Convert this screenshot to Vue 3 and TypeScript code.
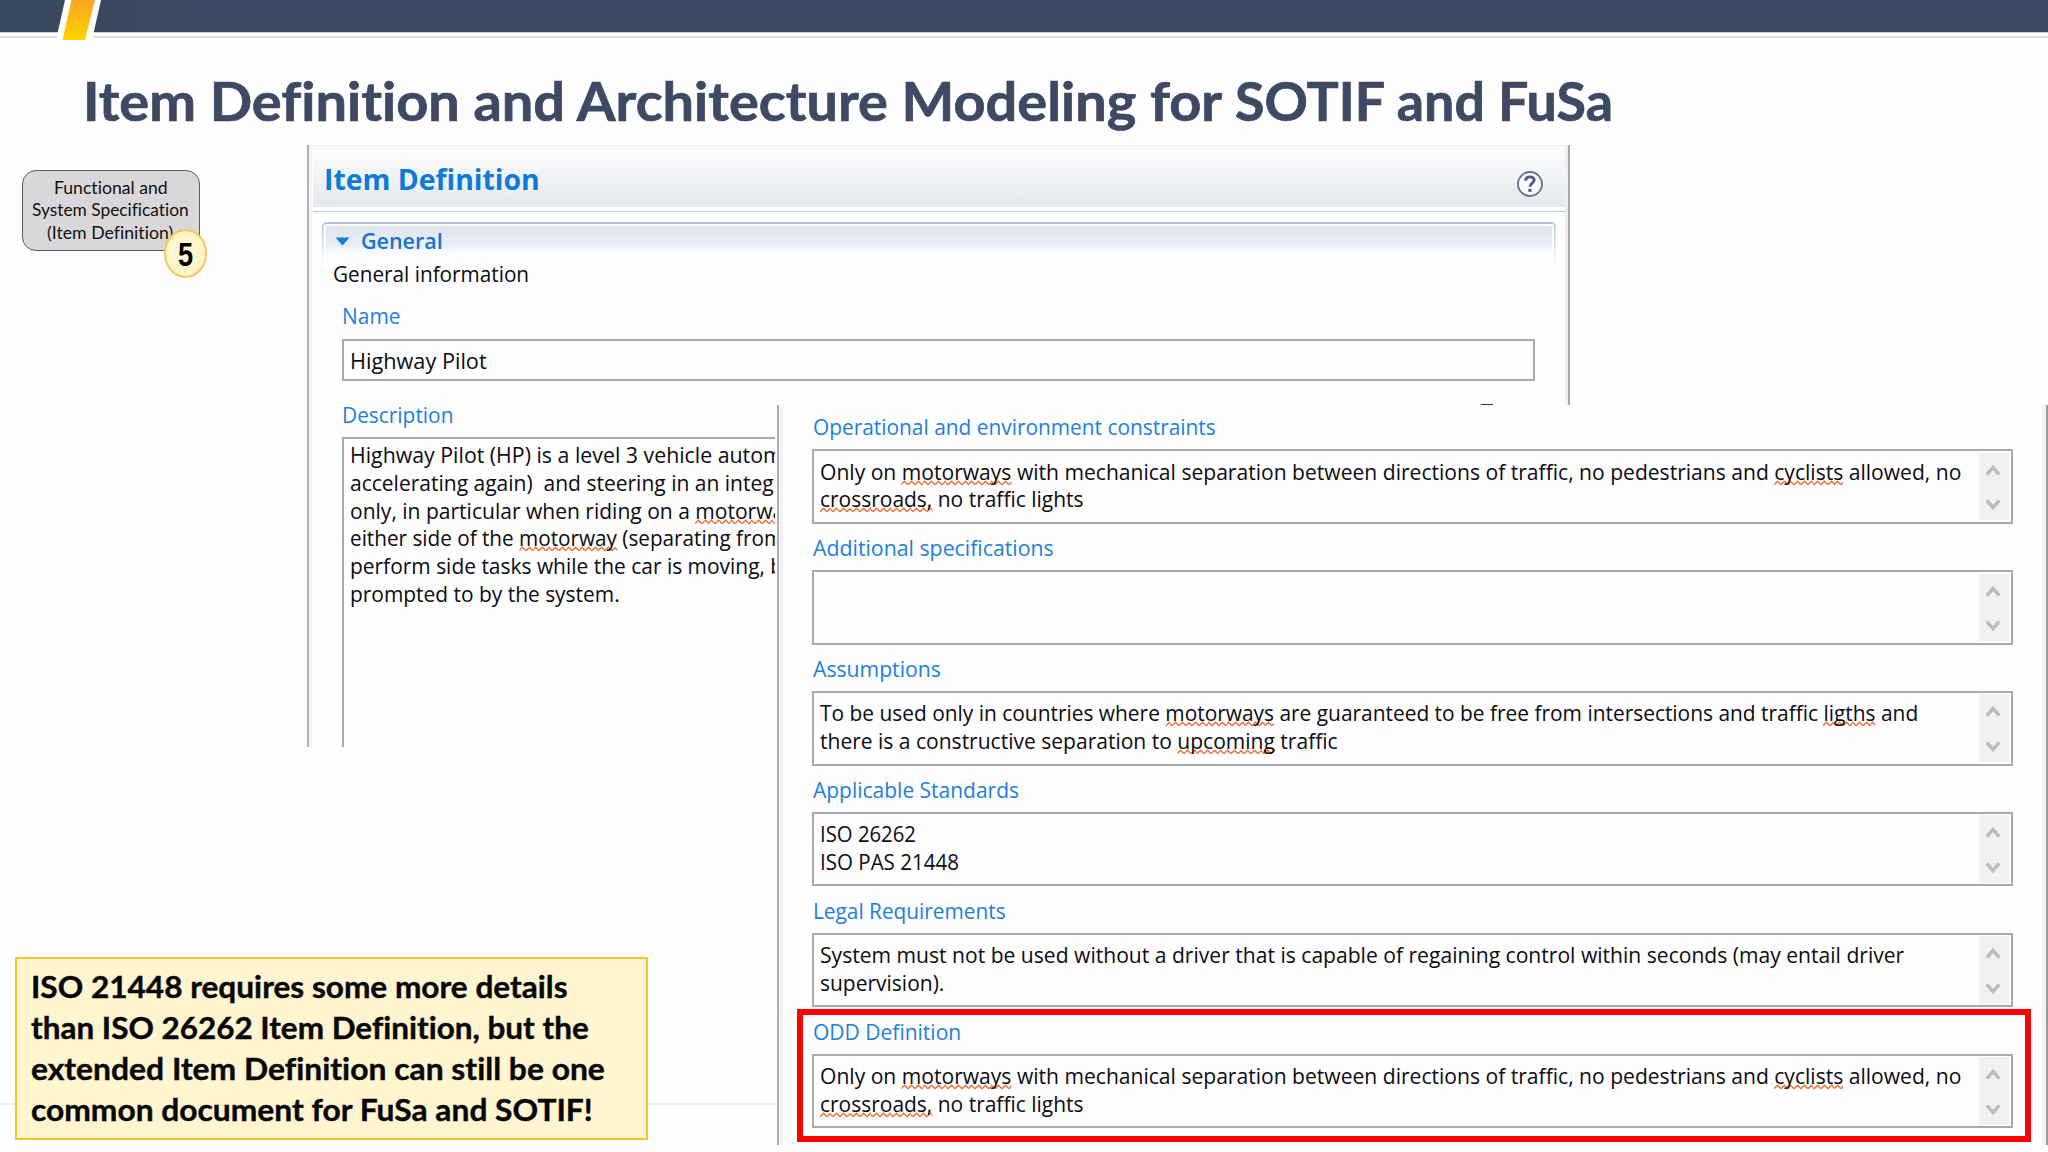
<script setup lang="ts">
import type { Directive } from 'vue'

interface Segment {
  text: string
  misspelled?: boolean
}
interface Line {
  width: number
  segments: Segment[]
}
interface Field {
  label: string
  labelWidth: number
  lines: Line[]
}

/* Stretches a run of text to a given width in pixels; the margin keeps its layout width in step. */
const vFit: Directive<HTMLElement, number> = {
  mounted(el, binding) {
    const natural = el.offsetWidth
    if (natural > 0) {
      el.style.transform = `scaleX(${binding.value / natural})`
      el.style.marginRight = `${binding.value - natural}px`
    }
  },
}

/* Words between underscores are flagged by the spell checker. */
function line(width: number, source: string): Line {
  const segments = source
    .split('_')
    .map((text, i) => ({ text, misspelled: i % 2 === 1 }))
    .filter((s) => s.text.length > 0)
  return { width, segments }
}

const oddLines: Line[] = [
  line(1141, 'Only on _motorways_ with mechanical separation between directions of traffic, no pedestrians and _cyclists_ allowed, no'),
  line(264, '_crossroads,_ no traffic lights'),
]

const description: Line[] = [
  line(433, 'Highway Pilot (HP) is a level 3 vehicle autom'),
  line(424, 'accelerating again)  and steering in an integ'),
  line(434, 'only, in particular when riding on a _motorwa_'),
  line(433, 'either side of the _motorway_ (separating from'),
  line(433, 'perform side tasks while the car is moving, b'),
  line(270, 'prompted to by the system.'),
]

const fields: Field[] = [
  { label: 'Operational and environment constraints', labelWidth: 403, lines: oddLines },
  { label: 'Additional specifications', labelWidth: 241, lines: [] },
  {
    label: 'Assumptions',
    labelWidth: 128,
    lines: [
      line(1098, 'To be used only in countries where _motorways_ are guaranteed to be free from intersections and traffic _ligths_ and'),
      line(518, 'there is a constructive separation to _upcoming_ traffic'),
    ],
  },
  {
    label: 'Applicable Standards',
    labelWidth: 206,
    lines: [line(96, 'ISO 26262'), line(139, 'ISO PAS 21448')],
  },
  {
    label: 'Legal Requirements',
    labelWidth: 193,
    lines: [
      line(1084, 'System must not be used without a driver that is capable of regaining control within seconds (may entail driver'),
      line(124, 'supervision).'),
    ],
  },
  { label: 'ODD Definition', labelWidth: 148, lines: oddLines },
]

const note: Line[] = [
  line(537, 'ISO 21448 requires some more details'),
  line(558, 'than ISO 26262 Item Definition, but the'),
  line(574, 'extended Item Definition can still be one'),
  line(562, 'common document for FuSa and SOTIF!'),
]

const chip: Line[] = [
  line(114, 'Functional and'),
  line(157, 'System Specification'),
  line(126, '(Item Definition)'),
]
</script>

<template>
  <main class="slide">
    <header class="band">
      <svg class="slash" width="52" height="42" viewBox="0 0 52 42">
        <polygon points="10,0 46,0 37,40 1,40" fill="#fff" />
        <defs>
          <linearGradient id="slash-fill" x1="0" y1="0" x2="0" y2="1">
            <stop offset="0" stop-color="#fba526" />
            <stop offset="1" stop-color="#ffd400" />
          </linearGradient>
        </defs>
        <polygon points="16.5,0 40,0 30,40 7.5,40" fill="url(#slash-fill)" />
      </svg>
    </header>

    <h1 class="title"><span v-fit="1152" class="fit">{{ 'Item Definition and Architecture Modeling for ' }}</span><span v-fit="378" class="fit">SOTIF and FuSa</span></h1>

    <div class="footer-rule"></div>

    <div class="chip">
      <div v-for="(l, i) in chip" :key="i" class="chip-line">
        <span v-fit="l.width" class="fit">{{ l.segments[0].text }}</span>
      </div>
      <div class="badge"><span>5</span></div>
    </div>

    <section class="editor">
      <div class="editor-edge"></div>
      <div class="editor-body">
        <div class="editor-head">
          <span v-fit="216" class="fit editor-title">Item Definition</span>
          <svg class="help" width="28" height="28" viewBox="0 0 28 28">
            <circle cx="14" cy="14" r="12" fill="#f9fbfd" stroke="#66708a" stroke-width="1.8" />
            <path d="M9.6 10.8 C9.8 5.6 18.3 5.8 18.2 10.3 C18.1 13.2 14 13.3 14 16.7" fill="none" stroke="#4b5b82" stroke-width="2.8" />
            <rect x="12.4" y="18.8" width="3.1" height="3.1" fill="#4b5b82" />
          </svg>
        </div>
        <div class="section">
          <div class="section-head">
            <svg width="15" height="9" viewBox="0 0 15 9"><path d="M0.5 0.5H14.5L7.5 8.5Z" fill="#1080d8" /></svg>
            <span v-fit="82" class="fit section-title">General</span>
          </div>
          <div class="section-info"><span v-fit="196" class="fit">General information</span></div>
          <div class="label name-label"><span v-fit="59" class="fit">Name</span></div>
          <div class="input"><span v-fit="137" class="fit">Highway Pilot</span></div>
          <div class="label desc-label"><span v-fit="111" class="fit">Description</span></div>
          <div class="textarea">
            <div v-for="(l, i) in description" :key="i" class="text-line">
              <span v-fit="l.width" class="fit"><span v-for="(s, j) in l.segments" :key="j" :class="{ misspelled: s.misspelled }">{{ s.text }}</span></span>
            </div>
          </div>
        </div>
      </div>
      <div class="editor-edge right"></div>
      <div class="fragment"></div>
    </section>

    <section class="details">
      <div v-for="f in fields" :key="f.label" class="field">
        <div class="field-label"><span v-fit="f.labelWidth" class="fit">{{ f.label }}</span></div>
        <div class="field-box">
          <div class="field-text">
            <div v-for="(l, i) in f.lines" :key="i" class="text-line">
              <span v-fit="l.width" class="fit"><span v-for="(s, j) in l.segments" :key="j" :class="{ misspelled: s.misspelled }">{{ s.text }}</span></span>
            </div>
          </div>
          <div class="scroll">
            <svg width="16" height="13" viewBox="0 0 16 13"><path d="M1.8 10.6 L8 3.4 L14.2 10.6" fill="none" stroke="#bdbdc1" stroke-width="3.6" /></svg>
            <svg width="16" height="13" viewBox="0 0 16 13"><path d="M1.8 2.4 L8 9.6 L14.2 2.4" fill="none" stroke="#bdbdc1" stroke-width="3.6" /></svg>
          </div>
        </div>
      </div>
      <div class="highlight"></div>
    </section>

    <aside class="note">
      <div v-for="(l, i) in note" :key="i" class="note-line">
        <span v-fit="l.width" class="fit">{{ l.segments[0].text }}</span>
      </div>
    </aside>
  </main>
</template>

<style>
body {
  margin: 0;
  background: #fefefe;
}
</style>

<style scoped>
.slide {
  position: relative;
  width: 2048px;
  height: 1152px;
  overflow: hidden;
  background: #fefefe;
  font-family: 'Open Sans', 'Noto Sans', sans-serif;
  font-size: 22px;
  font-variant-ligatures: none;
  color: #0b0b12;
}
.fit {
  display: inline-block;
  flex: none;
  white-space: pre;
  transform-origin: 0 50%;
}

/* Top band */
.band {
  position: relative;
  height: 31.5px;
  background: linear-gradient(90deg, #38495c, #3f4a64 12%);
  border-bottom: 1.5px solid #c9d3e2;
  box-shadow: 0 3px 0 #fefefe, 0 5px 0 #dddde9;
}
.slash {
  position: absolute;
  left: 55px;
  top: 0;
}
.title {
  display: flex;
  margin: 0;
  padding: 33.5px 0 0 83px;
  height: 70px;
  line-height: 70px;
  font-family: Lato, sans-serif;
  font-weight: 700;
  font-size: 53px;
  color: #3e4a63;
  -webkit-text-stroke: 0.7px #3e4a63;
}
.footer-rule {
  position: absolute;
  left: 0;
  top: 1103px;
  width: 778px;
  height: 2px;
  background: #ededef;
}

/* Process step */
.chip {
  position: absolute;
  left: 21.5px;
  top: 169.5px;
  box-sizing: border-box;
  width: 178px;
  height: 81px;
  padding-top: 6px;
  border: 1.5px solid #5c5a5e;
  border-radius: 14px;
  background: #d9d7da;
  font-family: Lato, sans-serif;
  font-size: 17px;
  color: #111;
}
.chip-line {
  display: flex;
  justify-content: center;
  height: 22.8px;
  line-height: 22.8px;
}
.badge {
  position: absolute;
  left: 141px;
  top: 58.5px;
  box-sizing: border-box;
  width: 43.5px;
  height: 48.5px;
  display: flex;
  align-items: center;
  justify-content: center;
  border: 2px solid #f2c862;
  border-radius: 50%;
  background: radial-gradient(circle at 45% 50%, #fffbe0, #fff1b4);
  font-family: 'Liberation Sans', Arial, sans-serif;
  font-weight: 700;
  font-size: 34px;
  line-height: 44px;
  color: #000;
}
.badge span {
  display: inline-block;
  transform: translateY(1px) scaleX(0.8);
}

/* Item definition editor */
.editor {
  position: absolute;
  left: 307px;
  top: 145px;
  width: 1263px;
  height: 602px;
  display: flex;
}
.editor-edge {
  flex: none;
  width: 2px;
  margin-right: 1px;
  background: #b3b0b5;
  border-right: 3px solid #f4f4f7;
}
.editor-edge.right {
  height: 260px;
  margin: 0;
  border-right: 0;
  border-left: 3px solid #efeff3;
  background: #a9a7ab;
}
.editor-body {
  flex: 1;
  min-width: 0;
}
.editor-head {
  box-sizing: border-box;
  height: 66.5px;
  padding: 13.4px 21px 0 11px;
  display: flex;
  justify-content: space-between;
  border-top: 1.5px solid #efeff2;
  border-bottom: 1.5px solid #b4c9e4;
  background: linear-gradient(#fdfdfe, #e4e8ed) 0 0 / 100% 61px no-repeat;
}
.editor-title {
  height: 40px;
  line-height: 40px;
  font-size: 28px;
  font-weight: 700;
  color: #0c7ad8;
}
.help {
  margin-top: 11px;
}
.section {
  margin: 10px 9.5px 0 9px;
}
.section-head {
  box-sizing: border-box;
  height: 43px;
  margin-bottom: -7px;
  padding: 1.5px 0 0 13px;
  display: flex;
  gap: 11px;
  border-top: 2px solid #b0c4d8;
  border-radius: 5px 5px 0 0;
  background:
    linear-gradient(#b0c4d8, #fefefe) 0 0 / 1.5px 100% no-repeat,
    linear-gradient(#b0c4d8, #fefefe) 100% 0 / 1.5px 100% no-repeat,
    linear-gradient(#e0e6ee, #eaeff5 52%, #f7fafd 58%, #fefefe) 50% 2px / calc(100% - 8px) 100% no-repeat;
}
.section-head svg {
  margin-top: 12px;
}
.section-title {
  height: 30px;
  line-height: 30px;
  font-weight: 600;
  color: #1673cc;
}
.section-info {
  height: 30px;
  padding-left: 11px;
  line-height: 30px;
}
.label {
  padding-left: 20px;
  height: 30px;
  line-height: 30px;
  color: #2080dc;
}
.name-label {
  margin-top: 12.5px;
}
.input {
  box-sizing: border-box;
  width: 1193px;
  height: 42px;
  margin: 9px 0 0 20px;
  padding: 5px 5.5px;
  border: 2px solid #aba9ad;
  line-height: 28px;
}
.desc-label {
  margin-top: 18px;
}
.textarea {
  box-sizing: border-box;
  width: 433px;
  height: 310px;
  margin: 8px 0 0 20px;
  padding: 2.3px 0 0 6px;
  overflow: hidden;
  border: solid #aba9ad;
  border-width: 2px 0 0 2px;
}
.text-line {
  display: flex;
  height: 27.7px;
  line-height: 27.7px;
}
.misspelled {
  background: url("data:image/svg+xml,%3Csvg xmlns='http://www.w3.org/2000/svg' width='7' height='6'%3E%3Cpath d='M0 4.8L3.5 1.2L7 4.8' fill='none' stroke='%23ea7038' stroke-width='1.4'/%3E%3C/svg%3E") 0 100% repeat-x;
}
/* Bottom of a control that is cut off by the details panel */
.fragment {
  position: absolute;
  left: 1174px;
  top: 258.5px;
  width: 12px;
  height: 1.5px;
  background: #3a3446;
}

/* Details panel */
.details {
  position: absolute;
  left: 775px;
  top: 405px;
  box-sizing: border-box;
  width: 1273px;
  height: 740px;
  padding: 6.4px 35.5px 0 37.2px;
  background:
    linear-gradient(#b0aeb2, #b0aeb2) 2px 0 / 2px 100% no-repeat,
    linear-gradient(#f3f3f6, #f3f3f6) 5px 0 / 3px 100% no-repeat,
    linear-gradient(#f1f1f4, #f1f1f4) 1267px 0 / 4px 100% no-repeat,
    linear-gradient(#9b999d, #9b999d) 1271px 0 / 2px 100% no-repeat,
    #fefefe;
}
.field {
  height: 120.85px;
}
.field-label {
  height: 37.9px;
  padding-left: 0.7px;
  line-height: 30px;
  color: #2080dc;
}
.field-box {
  box-sizing: border-box;
  height: 74.6px;
  display: flex;
  border: 2px solid #aba9ad;
}
.field-text {
  flex: 1;
  min-width: 0;
  padding: 6.4px 0 0 5.5px;
}
.scroll {
  flex: none;
  box-sizing: border-box;
  width: 30px;
  margin: 1.5px 1.5px 1.5px 0;
  padding: 11px 3px 9px 0;
  display: flex;
  flex-direction: column;
  align-items: center;
  justify-content: space-between;
  background: #f1f0f2;
}
.highlight {
  position: absolute;
  left: 22px;
  top: 604px;
  box-sizing: border-box;
  width: 1234px;
  height: 133px;
  border: 6px solid #fe0000;
}

/* Yellow remark */
.note {
  position: absolute;
  left: 15px;
  top: 957px;
  box-sizing: border-box;
  width: 633px;
  height: 182.5px;
  padding: 7px 0 0 14px;
  border: 2px solid #f4c62e;
  background: #fff5d0;
  font-family: Lato, sans-serif;
  font-weight: 700;
  font-size: 30px;
  color: #080808;
  -webkit-text-stroke: 0.4px #080808;
}
.note-line {
  height: 40.9px;
  line-height: 40.9px;
}
</style>
